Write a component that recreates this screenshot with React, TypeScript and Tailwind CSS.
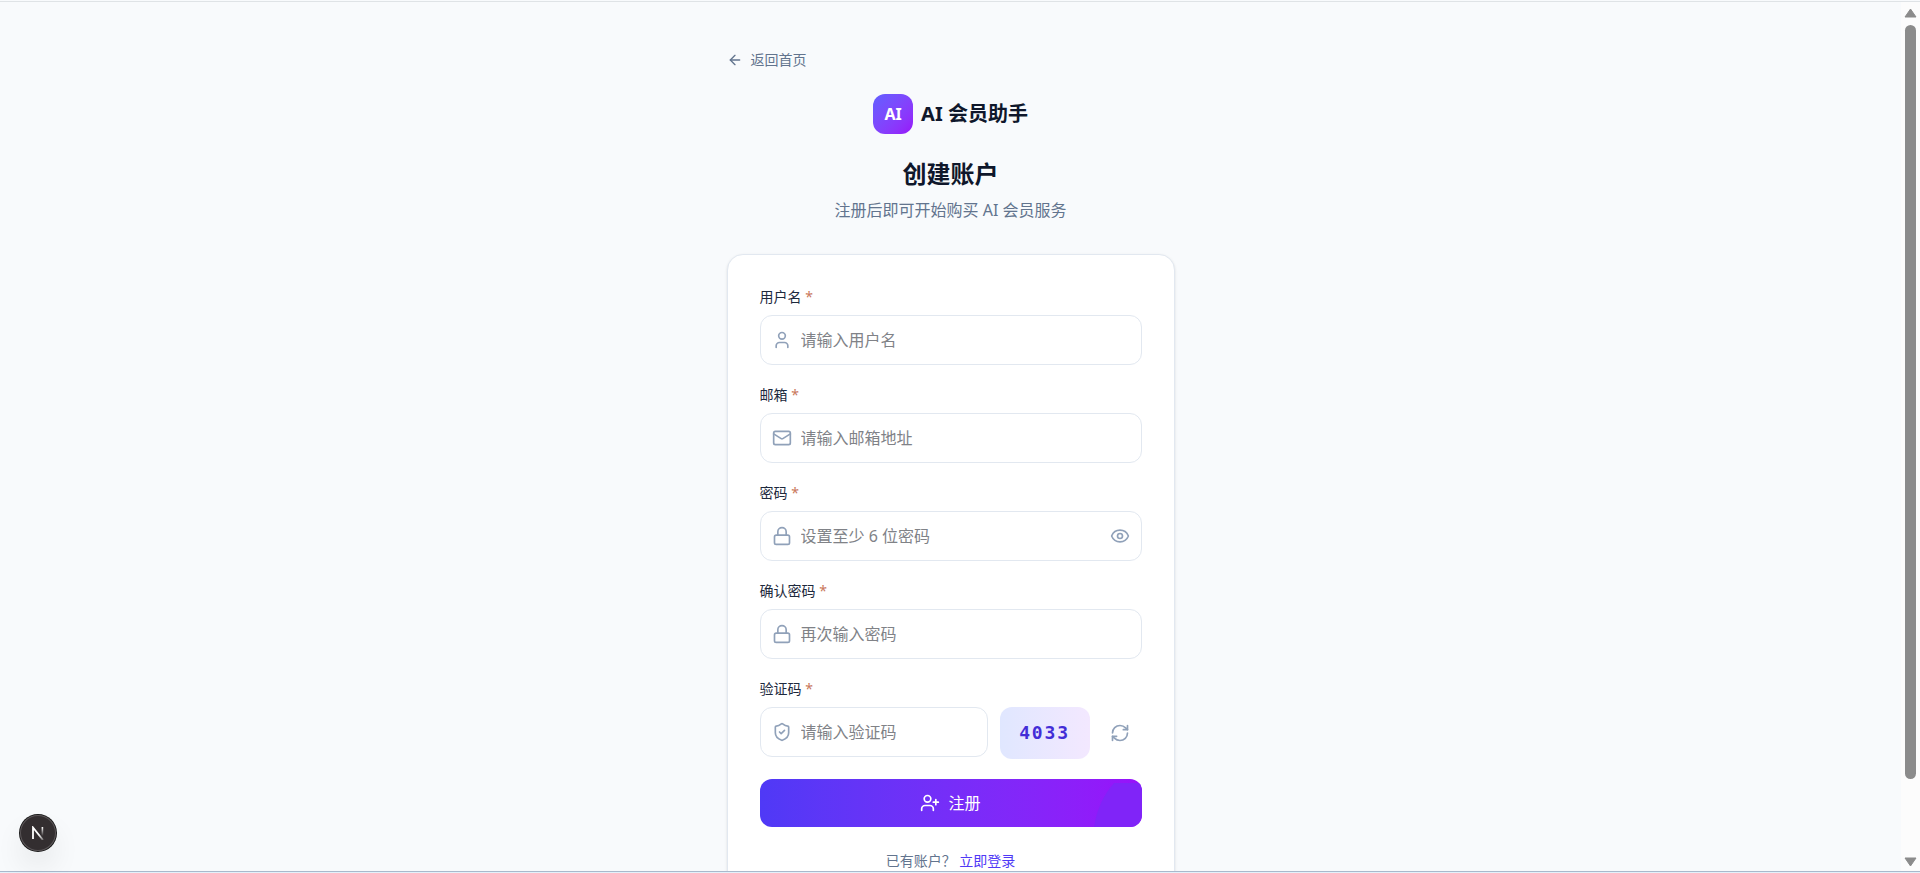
import { useState } from "react";
import type { ReactNode } from "react";
import { ArrowLeft, Eye, EyeOff, Lock, Mail, RefreshCw, ShieldCheck, User, UserPlus } from "lucide-react";

interface FieldProps {
  id: string;
  label: string;
  placeholder: string;
  type?: string;
  icon: ReactNode;
  action?: ReactNode;
  beside?: ReactNode;
}

function Field({ id, label, placeholder, type = "text", icon, action, beside }: FieldProps) {
  return (
    <div>
      <label htmlFor={id} className="mb-2 block text-sm text-[#1d293d]">
        {label} <span className="text-[#c9775a]">*</span>
      </label>
      <div className="flex items-start gap-3">
        <div className="relative min-w-0 flex-1">
          <span className="pointer-events-none absolute inset-y-0 left-3 flex items-center text-[#90a1b9]">{icon}</span>
          <input
            id={id}
            type={type}
            placeholder={placeholder}
            className="block w-full rounded-xl border border-[#e2e8f0] bg-white py-3 pr-4 pl-10 text-base text-[#0f172b] outline-none placeholder:text-[#808287]"
          />
          {action}
        </div>
        {beside}
      </div>
    </div>
  );
}

function DevBadge() {
  return (
    <button
      type="button"
      aria-label="Next.js"
      className="fixed bottom-[22px] left-5 flex size-9 items-center justify-center rounded-full bg-[#332e30] shadow-[0_0_0_1px_#171717,inset_0_0_0_1px_#5b5658,0_16px_32px_-8px_rgba(0,0,0,0.24)]"
    >
      <svg width="14" height="14" viewBox="0 0 14 14" fill="none" aria-hidden="true">
        <defs>
          <linearGradient id="stem" x1="0" y1="0" x2="0" y2="1">
            <stop offset="0" stopColor="#fff" />
            <stop offset="1" stopColor="#fff" stopOpacity="0" />
          </linearGradient>
          <linearGradient id="diagonal" x1="2" y1="1" x2="12" y2="14" gradientUnits="userSpaceOnUse">
            <stop offset="0.6" stopColor="#fff" />
            <stop offset="1" stopColor="#fff" stopOpacity="0.3" />
          </linearGradient>
        </defs>
        <path d="M2 13V1.5L12 14" stroke="url(#diagonal)" strokeWidth="1.8" />
        <rect x="10.6" y="1" width="1.6" height="9" fill="url(#stem)" />
      </svg>
    </button>
  );
}

function ScrollRail() {
  return (
    <div aria-hidden="true" className="flex w-[19px] shrink-0 flex-col items-center bg-[#fcfcfc] pt-1.5 pb-1">
      <svg width="13" height="10" viewBox="0 0 13 10">
        <path d="M6.5 1L12 9H1Z" fill="#8b8b8b" stroke="#8b8b8b" strokeLinejoin="round" />
      </svg>
      <div className="mt-[7px] mb-[78px] w-[11px] flex-1 rounded-full bg-[#8b8b8b]" />
      <svg width="13" height="10" viewBox="0 0 13 10">
        <path d="M6.5 9L12 1H1Z" fill="#8b8b8b" stroke="#8b8b8b" strokeLinejoin="round" />
      </svg>
    </div>
  );
}

export default function App() {
  const [visible, setVisible] = useState(false);
  const icon = "size-5";

  return (
    <div className="flex h-screen flex-col overflow-hidden bg-[#f8fafc] pt-px font-['Noto_Sans','Noto_Sans_CJK_SC',sans-serif]">
      <div className="flex min-h-0 flex-1 border-t border-[#dfe3e6]">
        <main className="min-w-0 flex-1 overflow-hidden px-4 pt-12">
          <div className="mx-auto max-w-md">
            <a href="#home" className="mb-6 flex w-fit items-center gap-2 text-sm text-[#62748e]">
              <ArrowLeft className="size-4" />
              返回首页
            </a>
            <header className="mb-8 text-center">
              <div className="mb-6 flex items-center justify-center gap-2">
                <span className="flex size-10 items-center justify-center rounded-xl bg-linear-to-br from-[#615fff] to-[#9810fa] font-bold text-white">
                  AI
                </span>
                <span className="text-xl font-bold text-[#0f172b]">AI 会员助手</span>
              </div>
              <h1 className="mb-2 text-2xl font-bold text-[#0f172b]">创建账户</h1>
              <p className="text-[#62748e]">注册后即可开始购买 AI 会员服务</p>
            </header>

            <section className="rounded-2xl border border-[#e2e8f0] bg-white p-8 shadow-sm">
              <form className="flex flex-col gap-5" onSubmit={(e) => e.preventDefault()}>
                <Field id="username" label="用户名" placeholder="请输入用户名" icon={<User className={icon} />} />
                <Field id="email" type="email" label="邮箱" placeholder="请输入邮箱地址" icon={<Mail className={icon} />} />
                <Field
                  id="password"
                  type={visible ? "text" : "password"}
                  label="密码"
                  placeholder="设置至少 6 位密码"
                  icon={<Lock className={icon} />}
                  action={
                    <button
                      type="button"
                      aria-label="显示密码"
                      onClick={() => setVisible(!visible)}
                      className="absolute inset-y-0 right-3 flex items-center text-[#90a1b9]"
                    >
                      {visible ? <EyeOff className={icon} /> : <Eye className={icon} />}
                    </button>
                  }
                />
                <Field id="confirm" type="password" label="确认密码" placeholder="再次输入密码" icon={<Lock className={icon} />} />
                <Field
                  id="captcha"
                  label="验证码"
                  placeholder="请输入验证码"
                  icon={<ShieldCheck className={icon} />}
                  beside={
                    <div className="flex items-center gap-2">
                      <div className="w-[90px] rounded-xl bg-linear-to-r from-[#e0e7ff] to-[#f3e8ff] py-3 text-center font-['DejaVu_Sans_Mono',monospace] text-lg font-bold tracking-widest text-[#432dd7]">
                        4033
                      </div>
                      <button type="button" aria-label="刷新验证码" className="p-3 text-[#90a1b9]">
                        <RefreshCw className={icon} />
                      </button>
                    </div>
                  }
                />
                <button
                  type="submit"
                  className="relative flex w-full items-center justify-center gap-2 overflow-hidden rounded-xl bg-linear-to-r from-[#4f39f6] to-[#9810fa] py-3 text-white"
                >
                  <svg className="absolute right-0 bottom-0" width="48" height="44" viewBox="0 0 48 44" aria-hidden="true">
                    <path d="M20 0H48V44H0Q4 18 20 0Z" fill="#8024f8" />
                  </svg>
                  <UserPlus className={icon} />
                  注册
                </button>
              </form>
              <p className="mt-6 text-center text-sm text-[#62748e]">
                已有账户？{" "}
                <a href="#login" className="text-[#4f39f6]">
                  立即登录
                </a>
              </p>
            </section>
          </div>
        </main>
        <ScrollRail />
      </div>
      <div className="h-0.5 shrink-0 border-t border-[#a9b9cc] bg-[#e3f1fa]" />
      <DevBadge />
    </div>
  );
}
